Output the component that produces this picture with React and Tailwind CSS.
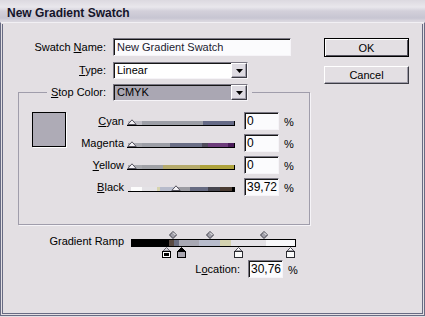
import React from 'react';

const sunken =
  'border border-t-[#7b7884] border-l-[#7b7884] border-r-[#f6f4f8] border-b-[#f6f4f8] shadow-[inset_1px_1px_0_#161616]';

const DropButton = () => (
  <div className="w-[16px] h-full flex items-center justify-center bg-[#dedbe2] border border-t-white border-l-white border-r-[#3c3c44] border-b-[#3c3c44] shadow-[inset_-1px_-1px_0_#9e9ba8]">
    <svg width="7" height="4" viewBox="0 0 7 4">
      <path d="M0 0h7L3.5 4z" fill="#000" />
    </svg>
  </div>
);

const Select = ({ value, shaded }) => (
  <div
    className={`w-[135px] h-[17px] flex ${sunken} ${
      shaded ? 'bg-[#aaa7b3]' : 'bg-white'
    }`}
  >
    <span className="flex-1 pl-[3px] leading-[15px]">{value}</span>
    <DropButton />
  </div>
);

const Thumb = ({ left }) => (
  <svg
    className="absolute top-[7px]"
    style={{ left }}
    width="10"
    height="7"
    viewBox="0 0 10 7"
  >
    <path d="M5 0.8L9.2 5.5H0.8z" fill="#f4f2f6" stroke="#55535e" strokeWidth="1" />
    <path d="M0 6.5H10" stroke="#000" strokeWidth="1" />
  </svg>
);

const sliders = [
  {
    label: 'yan',
    key: 'C',
    bar: 'bg-[linear-gradient(90deg,#bdbcc4_0_14px,#9c9ea6_14px_75px,#656a86_75px)]',
    thumb: -1,
    value: '0',
  },
  {
    label: 'Magenta',
    key: '',
    bar: 'bg-[linear-gradient(90deg,#a6a7ae_0_14px,#9c9ea6_14px_42px,#6a6e86_42px_74px,#504c5c_74px_80px,#6d3c7b_80px_100px,#4a1b5a_100px)]',
    thumb: -1,
    value: '0',
  },
  {
    label: 'ellow',
    key: 'Y',
    bar: 'bg-[linear-gradient(90deg,#a8a9ae_0_14px,#a0a1a6_14px_35px,#b5aa6c_35px_72px,#aea23c_72px)]',
    thumb: -1,
    value: '0',
  },
  {
    label: 'lack',
    key: 'B',
    bar: 'bg-[linear-gradient(90deg,#e3dfe3_0_3px,#fcfcfc_3px_14px,#e4e2e6_14px_29px,#d6d3ae_29px_32px,#b7bbcb_32px_47px,#9b9ba2_47px_62px,#676b82_62px_80px,#47464f_80px_92px,#4b3c33_92px_104px,#000_104px)]',
    thumb: 43,
    value: '39,72',
  },
];

const Diamond = ({ left }) => (
  <svg className="absolute top-0" style={{ left }} width="8" height="8" viewBox="0 0 8 8">
    <path d="M4 0.5L7.5 4L4 7.5L0.5 4z" fill="#a3a1ab" stroke="#3a3a44" strokeWidth="1" />
    <path d="M4 1.5L6.5 4" stroke="#fff" strokeWidth="1" />
  </svg>
);

const Stop = ({ left, kind }) => (
  <svg className="absolute top-[16px]" style={{ left }} width="9" height="11" viewBox="0 0 9 11">
    {kind === 'selected' && (
      <>
        <path d="M4.5 0.5L8 4H1z" fill="#d8d6dc" stroke="#6a6874" />
        <rect x="0.5" y="4.5" width="8" height="6" fill="#fff" stroke="#000" />
        <rect x="2" y="6" width="5" height="3" fill="#000" />
      </>
    )}
    {kind === 'dark' && (
      <>
        <path d="M4.5 0.5L8 4H1z" fill="#000" stroke="#000" />
        <rect x="0.5" y="4.5" width="8" height="6" fill="#a9a6b0" stroke="#000" />
      </>
    )}
    {kind === 'light' && (
      <>
        <path d="M4.5 0.5L8 4H1z" fill="#fff" stroke="#55535e" />
        <rect x="0.5" y="4.5" width="8" height="6" fill="#fafafa" stroke="#2a2a30" />
      </>
    )}
  </svg>
);

const u = (c) => <span className="underline underline-offset-[1px]">{c}</span>;

export default function App() {
  return (
    <div className="w-[425px] h-[317px] bg-[#e3dfe3] flex flex-col font-['Liberation_Sans',Arial,sans-serif] text-[11px] text-black">
      {/* title bar */}
      <div className="h-[22px] pl-[7px] pt-[7px] leading-[12px] text-[12px] font-bold text-[#14142a] bg-[linear-gradient(180deg,#dcd9e0_0,#e9e7ec_7px,#d3d0da_11px,#c7c5d2_18px,#dad7df_21px)]">
        New Gradient Swatch
      </div>

      {/* frame */}
      <div className="h-[294px] border border-t-[#f2f0f4] border-[#686b83] p-px">
        <div className="h-full border border-t-0 border-[#686b83] flex">
          {/* left side */}
          <div className="w-[321px] flex flex-col">
            <div className="mt-[14px] flex items-center">
              <div className="w-[103px] text-right">
                Swatch {u('N')}ame:
              </div>
              <div className={`ml-[7px] w-[178px] h-[18px] bg-[#fbfbfd] pl-[3px] leading-[16px] text-[#1c1c30] ${sunken}`}>
                New Gradient Swatch
              </div>
            </div>

            <div className="mt-[6px] flex items-center">
              <div className="w-[103px] text-right">{u('T')}ype:</div>
              <div className="ml-[7px]">
                <Select value="Linear" />
              </div>
            </div>

            <fieldset className="mt-[5px] ml-[15px] w-[292px] border border-[#a09dab] shadow-[1px_1px_0_#f6f4f8] pt-[11px] pb-[28px]">
              <legend className="ml-[28px] pr-[4px] flex items-center">
                <span className="w-[59px] text-right">
                  {u('S')}top Color:
                </span>
                <span className="ml-[7px]">
                  <Select value="CMYK" shaded />
                </span>
              </legend>
              <div className="flex pl-[13px]">
                <div className="w-[34px] h-[35px] border border-black bg-[#aeabb6] shadow-[1px_1px_0_#fff]" />
                <div className="grid grid-cols-[58px_111px_35px_12px] gap-y-[4px]">
                  {sliders.map((s) => (
                    <React.Fragment key={s.label}>
                      <div className="h-[18px] text-right leading-[17px] pt-[1px]">
                        {s.key && u(s.key)}
                        {s.label}
                      </div>
                      <div className="h-[18px] ml-[4px] relative">
                        <div className={`mt-[9px] h-[5px] border-b border-r border-black ${s.bar}`} />
                        <Thumb left={s.thumb} />
                      </div>
                      <div className={`ml-[9px] w-[35px] h-[18px] bg-[#fbfbfd] pl-[2px] leading-[17px] text-[12px] ${sunken}`}>
                        {s.value}
                      </div>
                      <div className="h-[18px] ml-[14px] leading-[16px] pt-[2px]">%</div>
                    </React.Fragment>
                  ))}
                </div>
              </div>
            </fieldset>

            <div className="mt-[6px] flex">
              <div className="w-[121px] text-right pt-[4px] leading-[13px]">
                Gradient Ramp
              </div>
              <div className="ml-[7px] relative w-[165px] h-[27px]">
                <div className="mt-[8px] h-[8px] border border-black bg-[linear-gradient(90deg,#000_0_37px,#5a4a42_37px_42px,#6a6d80_42px_47px,#a8a8b3_47px_67px,#b8bccc_67px_88px,#d4d2b0_88px_99px,#e4e2e6_99px_134px,#f8f8fa_134px)]" />
                <Diamond left={38} />
                <Diamond left={75} />
                <Diamond left={129} />
                <Stop left={31} kind="selected" />
                <Stop left={46} kind="dark" />
                <Stop left={103} kind="light" />
                <Stop left={155} kind="light" />
              </div>
            </div>

            <div className="mt-[2px] flex items-center">
              <div className="w-[237px] text-right">
                L{u('o')}cation:
              </div>
              <div className={`ml-[8px] w-[35px] h-[18px] bg-[#fbfbfd] pl-[2px] leading-[17px] text-[12px] ${sunken}`}>
                30,76
              </div>
              <div className="ml-[5px] pt-[2px]">%</div>
            </div>
          </div>

          {/* buttons */}
          <div className="flex flex-col pt-[14px]">
            <button className="w-[85px] h-[19px] border border-black bg-[#e3dfe3] shadow-[inset_1px_1px_0_#fff,inset_-1px_-1px_0_#55535e] text-[11px] leading-[16px]">
              OK
            </button>
            <button className="mt-[9px] w-[85px] h-[18px] border border-t-white border-l-white border-r-[#3c3c44] border-b-[#3c3c44] bg-[#e3dfe3] shadow-[inset_-1px_-1px_0_#9e9ba8] text-[11px] leading-[15px]">
              Cancel
            </button>
          </div>
        </div>
      </div>
    </div>
  );
}
